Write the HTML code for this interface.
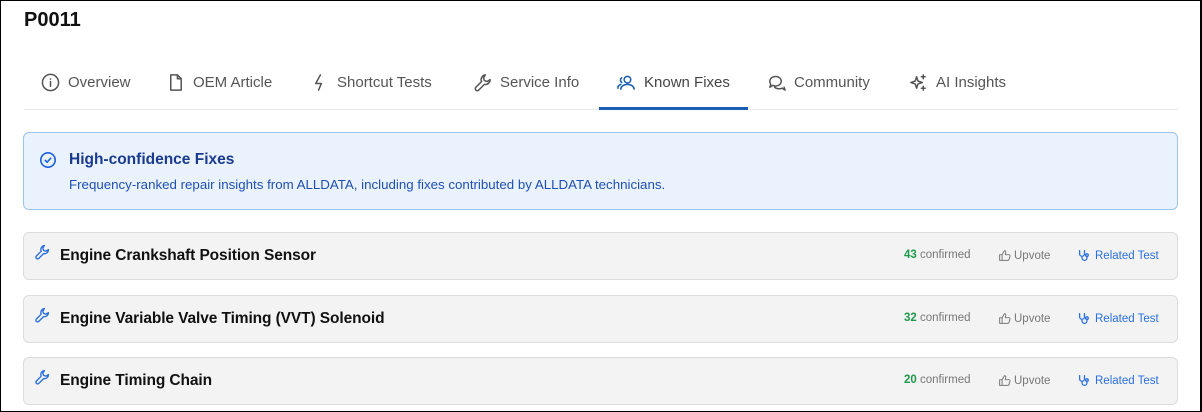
<!DOCTYPE html><html><head><style>
*{box-sizing:border-box;margin:0;padding:0}
body{width:1202px;height:412px;overflow:hidden;background:#fff;font-family:"Liberation Sans",sans-serif;position:relative}
.frame{position:absolute;left:0;top:0;width:1202px;height:412px;border:1px solid #000;border-right:2px solid #000}
h1{position:absolute;left:24px;top:9px;font-size:20px;font-weight:bold;color:#111}
.tab{position:absolute;top:72px;height:20px;font-size:15px;color:#555;display:flex;align-items:center;gap:8px}
.tab svg{width:19px;height:19px;fill:none;stroke:#555;stroke-width:1.6;stroke-linecap:round;stroke-linejoin:round}
.divider{position:absolute;left:24px;top:109px;width:1154px;height:1px;background:#e8e8e8}
.ul{position:absolute;left:599px;top:107px;width:149px;height:3px;background:#1a5fb4}
.banner{position:absolute;left:23px;top:132px;width:1155px;height:78px;background:#eaf3fd;border:1px solid #9cc4ee;border-radius:6px}
.banner .t{position:absolute;left:45px;top:18px;font-size:15.5px;font-weight:bold;color:#1a3a8f}
.banner .s{position:absolute;left:45px;top:44px;font-size:13.3px;color:#1f4fb3}
.row{position:absolute;left:23px;width:1155px;height:48px;background:#f3f3f3;border:1px solid #dcdcdc;border-radius:6px}
.row .n{position:absolute;left:36px;top:14px;font-size:15.5px;font-weight:bold;color:#111;letter-spacing:-0.1px}
.row .w{position:absolute;left:10px;top:11px}
.c{position:absolute;left:880px;top:16px;font-size:11.5px;color:#777}
.c b{color:#1e9a4a}
.u{position:absolute;left:974px;top:16px;font-size:11.5px;color:#777;display:flex;align-items:center;gap:3px}
.r{position:absolute;left:1054px;top:16px;font-size:11.5px;color:#2a6fe0;display:flex;align-items:center;gap:4px}
</style></head><body>
<div class="frame"></div>
<h1>P0011</h1>
<div class="tab" style="left:41px"><svg viewBox="0 0 20 20"><circle cx="10" cy="10" r="8.5"/><path d="M10 9v5M10 6.2v.2"/></svg>Overview</div>
<div class="tab" style="left:166px"><svg viewBox="0 0 20 20"><path d="M5 2h7l4 4v12H5zM12 2v4h4"/></svg>OEM Article</div>
<div class="tab" style="left:310px"><svg viewBox="0 0 20 20"><path d="M11 2L6 11h6l-3 7"/></svg>Shortcut Tests</div>
<div class="tab" style="left:473px"><svg viewBox="0 0 20 20"><path d="M13 2a5 5 0 0 0-4 7L3 15a2 2 0 0 0 3 3l6-6a5 5 0 0 0 6-5l-3 2-3-1-1-3z"/></svg>Service Info</div>
<div class="tab" style="left:617px;color:#444"><svg viewBox="0 0 20 20" style="stroke:#1a5fb4"><circle cx="11" cy="7" r="3.5"/><path d="M4 17a7 5 0 0 1 14 0M5 5a3 3 0 0 0 0 5M1 16a5 4 0 0 1 3-4"/></svg>Known Fixes</div>
<div class="tab" style="left:767px"><svg viewBox="0 0 20 20"><path d="M3 9a6 5 0 1 1 3 4l-3 2 1-3a5 5 0 0 1-1-3zM8 15a6 4 0 0 0 8 1l3 2-1-3"/></svg>Community</div>
<div class="tab" style="left:909px"><svg viewBox="0 0 20 20"><path d="M8 4l1.5 4.5L14 10l-4.5 1.5L8 16l-1.5-4.5L2 10l4.5-1.5zM15 2v4M13 4h4M15 14v4M13 16h4"/></svg>AI Insights</div>
<div class="divider"></div><div class="ul"></div>
<div class="banner">
<svg style="position:absolute;left:15px;top:18px" width="18" height="18" viewBox="0 0 20 20" fill="none" stroke="#1a5fe0" stroke-width="1.8"><circle cx="10" cy="10" r="8"/><path d="M6.5 10l2.5 2.5 4.5-5"/></svg>
<div class="t">High-confidence Fixes</div>
<div class="s">Frequency-ranked repair insights from ALLDATA, including fixes contributed by ALLDATA technicians.</div>
</div>
<!-- rows -->
<div class="row" style="top:232px"><svg class="w" width="16" height="16" viewBox="0 0 20 20" fill="none" stroke="#2a6fe0" stroke-width="1.7" stroke-linejoin="round"><path d="M13 2a5 5 0 0 0-4 7L3 15a2 2 0 0 0 3 3l6-6a5 5 0 0 0 6-5l-3 2-3-1-1-3z"/></svg><div class="n">Engine Crankshaft Position Sensor</div><div class="c"><b>43</b> confirmed</div><div class="u"><svg width="13" height="13" viewBox="0 0 16 16" fill="none" stroke="#777" stroke-width="1.2" stroke-linejoin="round"><path d="M2 7h3v7H2zM5 7l3-5c1 0 2 1 1.5 2.5L9 7h4.5c1 0 1.5 1 1.2 2l-1.2 4c-.3 1-1 1-1.5 1H5"/></svg>Upvote</div><div class="r"><svg width="13" height="13" viewBox="0 0 16 16" fill="none" stroke="#2a6fe0" stroke-width="1.6" stroke-linecap="round"><path d="M2 2v4a3 3 0 0 0 6 0V2M5 9v2a3 3 0 0 0 6 0V9"/><circle cx="11" cy="7.5" r="1.6"/></svg>Related Test</div></div>
<div class="row" style="top:295px"><svg class="w" width="16" height="16" viewBox="0 0 20 20" fill="none" stroke="#2a6fe0" stroke-width="1.7" stroke-linejoin="round"><path d="M13 2a5 5 0 0 0-4 7L3 15a2 2 0 0 0 3 3l6-6a5 5 0 0 0 6-5l-3 2-3-1-1-3z"/></svg><div class="n">Engine Variable Valve Timing (VVT) Solenoid</div><div class="c"><b>32</b> confirmed</div><div class="u"><svg width="13" height="13" viewBox="0 0 16 16" fill="none" stroke="#777" stroke-width="1.2" stroke-linejoin="round"><path d="M2 7h3v7H2zM5 7l3-5c1 0 2 1 1.5 2.5L9 7h4.5c1 0 1.5 1 1.2 2l-1.2 4c-.3 1-1 1-1.5 1H5"/></svg>Upvote</div><div class="r"><svg width="13" height="13" viewBox="0 0 16 16" fill="none" stroke="#2a6fe0" stroke-width="1.6" stroke-linecap="round"><path d="M2 2v4a3 3 0 0 0 6 0V2M5 9v2a3 3 0 0 0 6 0V9"/><circle cx="11" cy="7.5" r="1.6"/></svg>Related Test</div></div>
<div class="row" style="top:357px"><svg class="w" width="16" height="16" viewBox="0 0 20 20" fill="none" stroke="#2a6fe0" stroke-width="1.7" stroke-linejoin="round"><path d="M13 2a5 5 0 0 0-4 7L3 15a2 2 0 0 0 3 3l6-6a5 5 0 0 0 6-5l-3 2-3-1-1-3z"/></svg><div class="n">Engine Timing Chain</div><div class="c"><b>20</b> confirmed</div><div class="u"><svg width="13" height="13" viewBox="0 0 16 16" fill="none" stroke="#777" stroke-width="1.2" stroke-linejoin="round"><path d="M2 7h3v7H2zM5 7l3-5c1 0 2 1 1.5 2.5L9 7h4.5c1 0 1.5 1 1.2 2l-1.2 4c-.3 1-1 1-1.5 1H5"/></svg>Upvote</div><div class="r"><svg width="13" height="13" viewBox="0 0 16 16" fill="none" stroke="#2a6fe0" stroke-width="1.6" stroke-linecap="round"><path d="M2 2v4a3 3 0 0 0 6 0V2M5 9v2a3 3 0 0 0 6 0V9"/><circle cx="11" cy="7.5" r="1.6"/></svg>Related Test</div></div>
</body></html>
